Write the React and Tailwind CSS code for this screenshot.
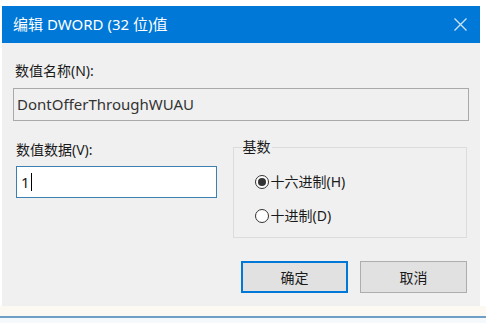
import React, { useState } from "react";

const font = { fontFamily: '"Noto Sans", "Noto Sans CJK SC", sans-serif' };

const Radio = ({ checked, label, onClick }) => (
  <button onClick={onClick} className="flex items-center h-[20px] gap-[2px] text-[14px] text-[#1a1a1a]">
    <span className="size-[14px] rounded-full border border-[#333] bg-white flex items-center justify-center">
      {checked && <span className="size-[8px] rounded-full bg-[#333]" />}
    </span>
    <span className="leading-[20px]">{label}</span>
  </button>
);

export default function App() {
  const [base, setBase] = useState("hex");

  return (
    <div className="w-[486px] h-[323px] bg-white overflow-hidden" style={font}>
      <div className="ml-[2px] mt-[6px] w-[478px]">
        <div className="h-[37px] bg-[#0078d7] flex items-center justify-between pl-[11px] pr-[13px]">
          <span className="text-white text-[15px] leading-none">编辑 DWORD (32 位)值</span>
          <svg width="13" height="13" viewBox="0 0 13 13">
            <path d="M0.5 0.5 L12.5 12.5 M12.5 0.5 L0.5 12.5" stroke="#cfe4f7" strokeWidth="1.3" />
          </svg>
        </div>

        <div className="bg-[#f0f0f0] pl-[11px] pr-[13px] pt-[18px] pb-[13px] text-[14px] text-[#1a1a1a]">
          <div className="h-[19px] leading-[19px] pl-[2px]">数值名称(N):</div>
          <div className="mt-[8px] h-[33px] w-[456px] border border-[#a9a9a9] bg-[#f0f0f0] flex items-center pl-[3px] text-[15px] text-[#333]">
            DontOfferThroughWUAU
          </div>

          <div className="mt-[20px] flex">
            <div className="ml-[3px] w-[201px]">
              <div className="h-[18px] leading-[18px]">数值数据(V):</div>
              <div className="mt-[7px] h-[32px] border border-[#3c7fb1] bg-white flex items-center pl-[4px] text-[15px] text-[#222]">
                <span>1</span>
                <span className="ml-[1px] w-[1px] h-[18px] bg-black" />
              </div>
            </div>

            <fieldset className="ml-[16px] mt-[-1px] w-[235px] h-[98px] border border-[#dcdcdc]">
              <legend className="ml-[8px] px-[1px] text-[14px] leading-[14px]">基数</legend>
              <div className="pl-[21px] mt-[18px] flex flex-col gap-[14px]">
                <Radio checked={base === "hex"} label="十六进制(H)" onClick={() => setBase("hex")} />
                <Radio checked={base === "dec"} label="十进制(D)" onClick={() => setBase("dec")} />
              </div>
            </fieldset>
          </div>

          <div className="mt-[23px] flex justify-end gap-[12px]">
            <button className="w-[107px] h-[32px] bg-[#e1e1e1] border-2 border-[#0078d7] text-[14px]">确定</button>
            <button className="w-[107px] h-[32px] bg-[#e1e1e1] border border-[#adadad] text-[14px]">取消</button>
          </div>
        </div>
      </div>

      <div className="h-[10px] bg-[#fcf8f2]" />
      <div className="h-[2px] bg-[#6f9fc6]" />
      <div className="h-[10px] bg-[#f6f9fb]" />
    </div>
  );
}
